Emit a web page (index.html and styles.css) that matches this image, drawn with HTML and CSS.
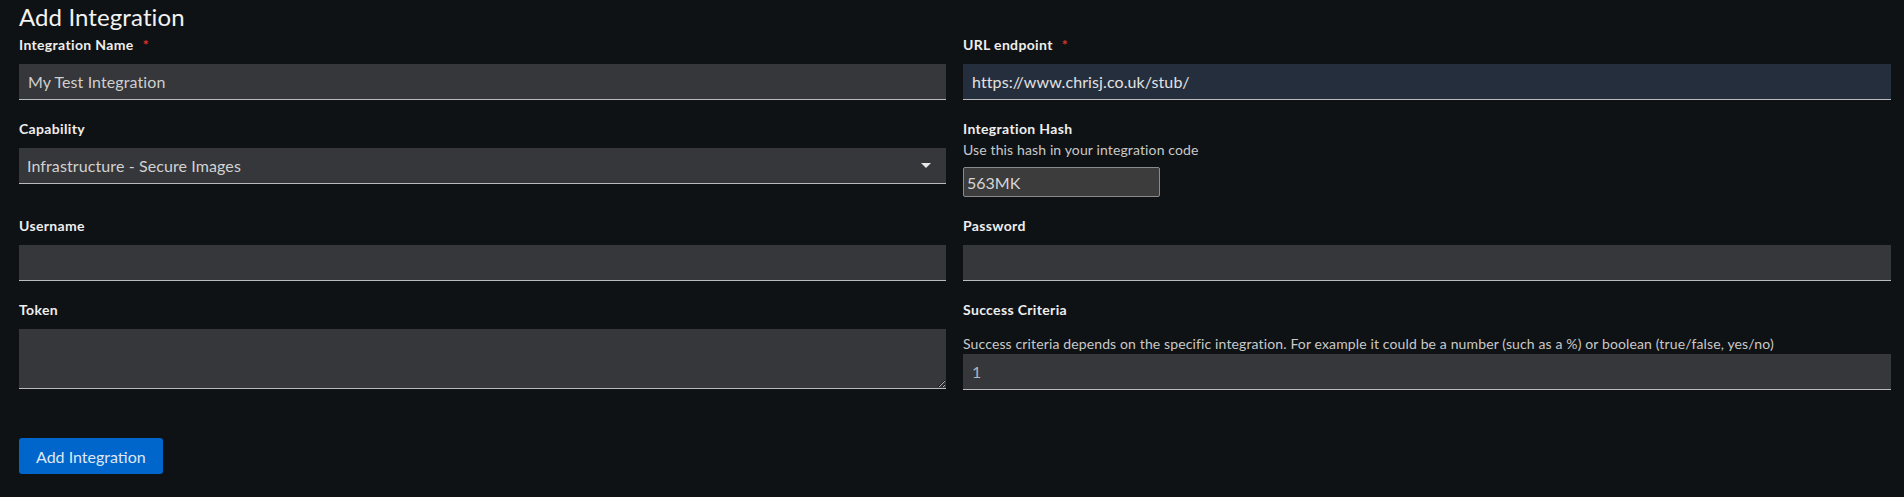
FILE: index.html
```html
<!DOCTYPE html>
<html lang="en">
<head>
<meta charset="utf-8">
<title>Add Integration</title>
<link rel="stylesheet" href="styles.css">
</head>
<body>
<div class="page">
  <h1 class="title">Add Integration</h1>
  <form class="form">
    <div class="field">
      <label class="label">Integration Name<span class="req">*</span></label>
      <input class="input" type="text" value="My Test Integration">
    </div>
    <div class="field">
      <label class="label">URL endpoint<span class="req">*</span></label>
      <input class="input input--filled" type="text" value="https://www.chrisj.co.uk/stub/">
    </div>
    <div class="field">
      <label class="label">Capability</label>
      <div class="select">
        <span class="select-text">Infrastructure - Secure Images</span>
        <span class="caret"></span>
      </div>
    </div>
    <div class="field">
      <label class="label label--tight">Integration Hash</label>
      <div class="helper helper--hash">Use this hash in your integration code</div>
      <input class="hash" type="text" value="563MK">
    </div>
    <div class="field">
      <label class="label">Username</label>
      <input class="input" type="text">
    </div>
    <div class="field">
      <label class="label">Password</label>
      <input class="input" type="password">
    </div>
    <div class="field">
      <label class="label">Token</label>
      <textarea class="textarea"></textarea>
    </div>
    <div class="field">
      <label class="label label--tight">Success Criteria</label>
      <div class="helper helper--criteria">Success criteria depends on the specific integration. For example it could be a number (such as a %) or boolean (true/false, yes/no)</div>
      <input class="input input--value" type="text" value="1">
    </div>
  </form>
  <button class="btn" type="button">Add Integration</button>
</div>
</body>
</html>
```
FILE: styles.css
```css
html, body {
  margin: 0;
  padding: 0;
  background: #0f1214;
}
body {
  font-family: Lato, "Liberation Sans", sans-serif;
  color: #e6e6e6;
  height: 497px;
  overflow: hidden;
}
.page {
  padding: 0 13px 0 19px;
}
.title {
  margin: 0;
  font-size: 24px;
  font-weight: 400;
  line-height: 32px;
  padding-top: 1px;
  height: 33px;
  color: #f2f2f2;
  letter-spacing: 0.1px;
}
.form {
  display: grid;
  grid-template-columns: 927px 928px;
  column-gap: 17px;
  row-gap: 18px;
  align-items: start;
}
.field {
  display: flex;
  flex-direction: column;
  align-items: stretch;
}
.label {
  font-size: 14px;
  font-weight: 700;
  line-height: 21px;
  margin-bottom: 9px;
  color: #eeeeee;
  letter-spacing: 0.35px;
}
.label--tight {
  margin-bottom: 0;
}
.req {
  color: #e0342a;
  margin-left: 9px;
}
.input {
  box-sizing: border-box;
  height: 36px;
  border: 0;
  border-bottom: 1px solid #b8babd;
  background: #36373b;
  color: #cfcfcf;
  font-family: inherit;
  font-size: 16px;
  letter-spacing: 0.1px;
  padding: 0 9px;
  outline: none;
}
.input--filled {
  background: #252e3d;
  color: #e2e2e2;
}
.input--value {
  color: #aab6c4;
}
.select {
  box-sizing: border-box;
  height: 36px;
  background: #36373b;
  border-bottom: 1px solid #b8babd;
  display: flex;
  align-items: center;
  justify-content: space-between;
  padding: 0 15px 0 8px;
  font-size: 16px;
  letter-spacing: 0.1px;
  color: #d2d2d2;
}
.caret {
  width: 0;
  height: 0;
  border-left: 5px solid transparent;
  border-right: 5px solid transparent;
  border-top: 5px solid #e8e8e8;
}
.helper {
  font-size: 14px;
  line-height: 21px;
  color: #c9c9c9;
  letter-spacing: 0.13px;
}
.helper--hash {
  margin-bottom: 7px;
}
.helper--criteria {
  margin-top: 13px;
}
.hash {
  box-sizing: border-box;
  width: 197px;
  height: 30px;
  background: #3c3c3c;
  border: 1px solid #8a8a8a;
  border-radius: 2px;
  color: #d6d6d6;
  font-family: inherit;
  font-size: 16px;
  padding: 0 3px;
  outline: none;
}
.textarea {
  box-sizing: border-box;
  height: 60px;
  background: #36373b;
  border: 0;
  border-bottom: 1px solid #b8babd;
  color: #d2d2d2;
  font-family: inherit;
  font-size: 16px;
  padding: 6px 9px;
  resize: vertical;
  outline: none;
  color-scheme: dark;
}
.btn {
  margin-top: 48px;
  height: 36px;
  padding: 0 17px;
  background: #0066cc;
  color: #dfe8f2;
  border: 0;
  border-radius: 3px;
  font-family: inherit;
  font-size: 16px;
}
```
